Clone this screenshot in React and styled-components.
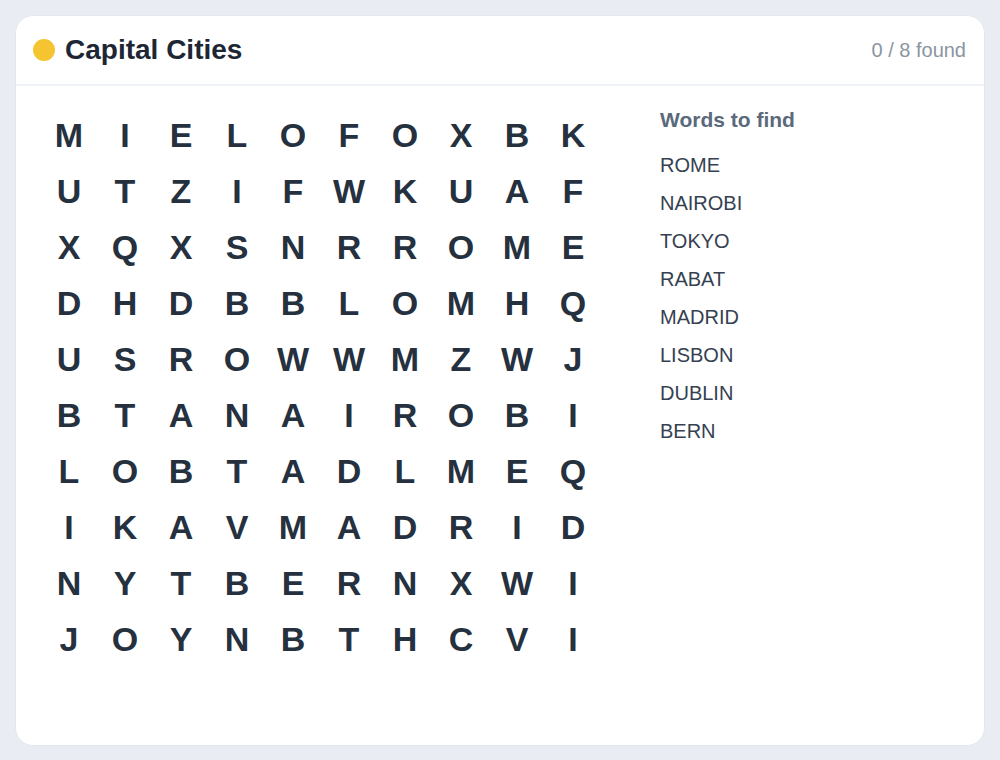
import React from "react";
import styled, { createGlobalStyle } from "styled-components";

const Global = createGlobalStyle`
  html, body { margin: 0; padding: 0; background: #e9edf3; }
  body { font-family: "Liberation Sans", Arial, sans-serif; }
  * { box-sizing: border-box; }
`;

const Page = styled.div`
  padding: 15px;
  height: 760px;
`;

const Card = styled.div`
  background: #ffffff;
  border-radius: 18px;
  height: 731px;
  border: 1px solid #e2e7ee;
  display: flex;
  flex-direction: column;
  overflow: hidden;
`;

const Header = styled.div`
  height: 70px;
  border-bottom: 2px solid #eef1f5;
  display: flex;
  align-items: center;
  justify-content: space-between;
  padding: 0 18px 0 17px;
`;

const TitleWrap = styled.div`
  display: flex;
  align-items: center;
  gap: 10px;
`;

const Dot = styled.span`
  width: 22px;
  height: 22px;
  border-radius: 50%;
  background: ${(p) => p.color};
  display: inline-block;
`;

const Title = styled.h1`
  margin: 0;
  font-size: 28px;
  font-weight: 700;
  color: #1d2634;
`;

const Count = styled.span`
  font-size: 20px;
  color: #8b95a2;
`;

const Body = styled.div`
  display: flex;
  padding: 21px 0 0 25px;
  gap: 59px;
`;

const Grid = styled.div`
  display: grid;
  grid-template-columns: repeat(10, 56px);
  grid-auto-rows: 56px;
`;

const Cell = styled.div`
  display: flex;
  align-items: center;
  justify-content: center;
  font-size: 34px;
  font-weight: 700;
  color: #263140;
`;

const Side = styled.div`
  display: flex;
  flex-direction: column;
  padding-top: 1px;
`;

const SideTitle = styled.h2`
  margin: 0 0 22px 0;
  font-size: 21px;
  font-weight: 700;
  color: #5a6a7b;
`;

const WordList = styled.ul`
  list-style: none;
  margin: 0;
  padding: 0;
  display: flex;
  flex-direction: column;
  gap: 15px;
`;

const Word = styled.li`
  font-size: 20px;
  line-height: 23px;
  color: #354151;
`;

const rows = [
  "MIELOFOXBK",
  "UTZIFWKUAF",
  "XQXSNRROME",
  "DHDBBLOMHQ",
  "USROWWMZWJ",
  "BTANAIROBI",
  "LOBTADLMEQ",
  "IKAVMADRID",
  "NYTBERNXWI",
  "JOYNBTHCVI",
];

const words = ["ROME", "NAIROBI", "TOKYO", "RABAT", "MADRID", "LISBON", "DUBLIN", "BERN"];

export default function App() {
  return (
    <>
      <Global />
      <Page>
        <Card>
          <Header>
            <TitleWrap>
              <Dot color="#f5c431" />
              <Title>Capital Cities</Title>
            </TitleWrap>
            <Count>0 / {words.length} found</Count>
          </Header>
          <Body>
            <Grid>
              {rows.map((r, ri) =>
                r.split("").map((ch, ci) => <Cell key={`${ri}-${ci}`}>{ch}</Cell>)
              )}
            </Grid>
            <Side>
              <SideTitle>Words to find</SideTitle>
              <WordList>
                {words.map((w) => (
                  <Word key={w}>{w}</Word>
                ))}
              </WordList>
            </Side>
          </Body>
        </Card>
      </Page>
    </>
  );
}
